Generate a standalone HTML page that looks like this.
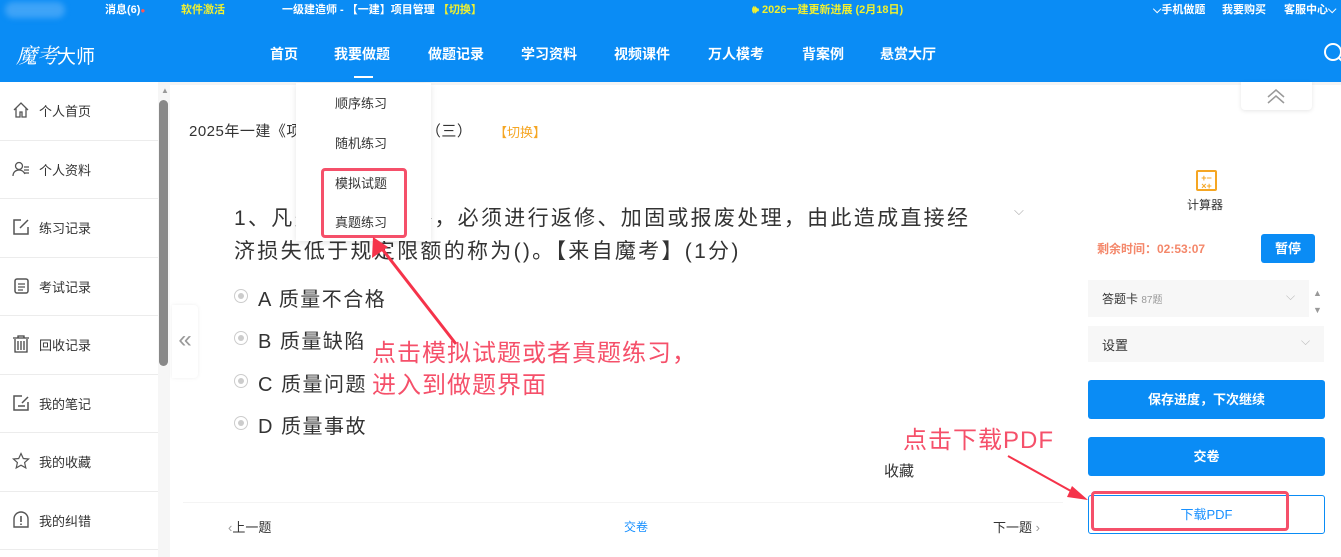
<!DOCTYPE html>
<html><head><meta charset="utf-8">
<style>
*{margin:0;padding:0;box-sizing:border-box}
body{width:1341px;height:557px;overflow:hidden;background:#fff;font-family:"Liberation Sans","Noto Sans CJK SC",sans-serif;color:#333;position:relative}
.a{position:absolute;white-space:nowrap}
.hdr{position:absolute;left:0;top:0;width:1341px;height:82px;background:#0a8cf5}
.top{font-size:11px;color:#fff;font-weight:bold;top:1px}
.nav{font-size:14px;color:#fff;top:44px;font-weight:bold}
.side{position:absolute;left:0;top:82px;width:158px}
.item{height:58.5px;border-bottom:1px solid #ececec;position:relative;font-size:13px;color:#333}
.item span{position:absolute;left:39px;top:19px}
.item svg{position:absolute;left:12px;top:19px}
.opt{font-size:20px;color:#333;letter-spacing:1.5px}
.rad{position:absolute;width:14px;height:14px;border:1px solid #ccc;border-radius:50%}
.rad:after{content:"";position:absolute;left:3px;top:3px;width:6px;height:6px;border-radius:50%;background:#ccc}
.btn{position:absolute;left:1088px;width:237px;height:39px;background:#0a8cf5;color:#fff;border-radius:3px;font-size:13px;font-weight:bold;text-align:center;line-height:39px}
.red{color:#f5506a;font-size:24px;letter-spacing:1px}
</style></head><body>
<div class="hdr"></div>
<div class="a" style="left:5px;top:2px;width:60px;height:16px;background:#3ea3f7;border-radius:8px;filter:blur(3px)"></div>
<div class="a top" style="left:105px">消息(6)<span style="color:#f55;font-size:8px">●</span></div>
<div class="a top" style="left:181px;color:#f0f030">软件激活</div>
<div class="a top" style="left:282px">一级建造师 - 【一建】项目管理 <span style="color:#f0f030">【切换】</span></div>
<div class="a top" style="left:752px;color:#f0f030">🕪 2026一建更新进展 (2月18日)</div>
<div class="a top" style="left:1153px">⌵手机做题</div>
<div class="a top" style="left:1222px">我要购买</div>
<div class="a top" style="left:1284px">客服中心⌵</div>
<div class="a" style="left:16px;top:40px;color:#fff;font-size:21px;font-family:'Liberation Serif','Noto Serif CJK SC',serif;font-style:italic">魔考</div>
<div class="a" style="left:57px;top:42px;color:#fff;font-size:19px">大师</div>
<div class="a nav" style="left:270px">首页</div>
<div class="a nav" style="left:334px">我要做题</div>
<div class="a" style="left:354px;top:76px;width:19px;height:2px;background:#fff"></div>
<div class="a nav" style="left:428px">做题记录</div>
<div class="a nav" style="left:521px">学习资料</div>
<div class="a nav" style="left:614px">视频课件</div>
<div class="a nav" style="left:708px">万人模考</div>
<div class="a nav" style="left:802px">背案例</div>
<div class="a nav" style="left:880px">悬赏大厅</div>
<svg class="a" style="left:1322px;top:42px" width="20" height="24"><circle cx="11" cy="10" r="8" fill="none" stroke="#fff" stroke-width="2"/><path d="M17 16l5 5" stroke="#fff" stroke-width="2"/></svg>

<div class="a" style="left:158px;top:82px;width:1183px;height:3px;background:#f4f4f4"></div>
<div class="side">
<div class="item"><svg width="18" height="18"><path d="M2 9L9 2l7 7M4 7v9h4v-5h2v5h4V7" fill="none" stroke="#555" stroke-width="1.3"/></svg><span>个人首页</span></div>
<div class="item"><svg width="18" height="18"><circle cx="7" cy="6" r="3.5" fill="none" stroke="#555" stroke-width="1.3"/><path d="M1 16c0-4 3-6 6-6s5 2 6 4M12 7h5M12 10h5M12 13h5" fill="none" stroke="#555" stroke-width="1.3"/></svg><span>个人资料</span></div>
<div class="item"><svg width="18" height="18"><path d="M9 2H2v14h14V9M8 10l8-8" fill="none" stroke="#555" stroke-width="1.5"/></svg><span>练习记录</span></div>
<div class="item"><svg width="18" height="18"><rect x="3" y="2" width="13" height="14" rx="2" fill="none" stroke="#555" stroke-width="1.5"/><path d="M6 7h7M6 10h7M6 13h5" stroke="#555" stroke-width="1.3"/></svg><span>考试记录</span></div>
<div class="item"><svg width="18" height="18"><path d="M1 3h16M6 3V1h6v2M3 4v13h12V4M6 6v9M9 6v9M12 6v9" fill="none" stroke="#444" stroke-width="1.3"/></svg><span>回收记录</span></div>
<div class="item"><svg width="18" height="18"><path d="M10 2H2v14h14V8M6 12h7M10 9l6-6" fill="none" stroke="#555" stroke-width="1.5"/></svg><span>我的笔记</span></div>
<div class="item"><svg width="18" height="18"><path d="M9 1.5l2.3 5 5.3.5-4 3.6 1.2 5.3L9 13.2 4.2 15.9l1.2-5.3-4-3.6 5.3-.5z" fill="none" stroke="#555" stroke-width="1.2"/></svg><span>我的收藏</span></div>
<div class="item"><svg width="18" height="18"><path d="M2 16V8a7 7 0 0114 0v8z" fill="none" stroke="#555" stroke-width="1.4"/><path d="M9 5v6M9 12.5v1.5" stroke="#555" stroke-width="1.6"/></svg><span>我的纠错</span></div>
</div>
<div class="a" style="left:158px;top:85px;width:12px;height:472px;background:#f6f6f6"></div>
<div class="a" style="left:161px;top:86px;font-size:8px;color:#999">▲</div>
<div class="a" style="left:159px;top:100px;width:9px;height:266px;background:#888;border-radius:5px"></div>
<div class="a" style="left:172px;top:305px;width:26px;height:73px;background:#fff;border-radius:0 4px 4px 0;box-shadow:0 0 4px #eee;color:#999;font-size:24px;text-align:center;line-height:70px">«</div>

<div class="a" style="left:189px;top:120px;font-size:15px;color:#333;letter-spacing:0.5px">2025年一建《项目管理》模拟试题（三）</div>
<div class="a" style="left:494px;top:122px;font-size:13px;color:#f5a623">【切换】</div>

<div class="a" style="left:234px;top:202px;font-size:21px;color:#333;line-height:33px;letter-spacing:2.3px">1、凡是质量不合格，必须进行返修、加固或报废处理，由此造成直接经<br>济损失低于规定限额的称为()。【来自魔考】(1分)</div>
<div class="a" style="left:1014px;top:203px;color:#aaa;font-size:13px">⌵</div>
<div class="rad" style="left:234px;top:289px"></div><div class="a opt" style="left:258px;top:283px">A 质量不合格</div>
<div class="rad" style="left:234px;top:331px"></div><div class="a opt" style="left:258px;top:325px">B 质量缺陷</div>
<div class="rad" style="left:234px;top:374px"></div><div class="a opt" style="left:258px;top:368px">C 质量问题</div>
<div class="rad" style="left:234px;top:416px"></div><div class="a opt" style="left:258px;top:410px">D 质量事故</div>
<div class="a" style="left:884px;top:460px;font-size:15px">收藏</div>
<div class="a" style="left:183px;top:502px;width:880px;height:1px;background:#f4f4f4"></div>
<div class="a" style="left:228px;top:517px;font-size:13px"><span style="color:#999">‹</span>上一题</div>
<div class="a" style="left:624px;top:518px;font-size:12px;color:#1890ff">交卷</div>
<div class="a" style="left:993px;top:517px;font-size:13px">下一题 <span style="color:#999">›</span></div>

<div class="a" style="left:296px;top:83px;width:135px;height:158px;background:#fff;box-shadow:0 2px 6px rgba(0,0,0,.1)"></div>
<div class="a" style="left:335px;top:93px;font-size:13px">顺序练习</div>
<div class="a" style="left:335px;top:133px;font-size:13px">随机练习</div>
<div class="a" style="left:335px;top:173px;font-size:13px">模拟试题</div>
<div class="a" style="left:335px;top:212px;font-size:13px">真题练习</div>
<div class="a" style="left:321px;top:168px;width:86px;height:70px;border:3px solid #f5506a;border-radius:4px"></div>

<svg class="a" style="left:0;top:0" width="1341" height="557">
<line x1="456" y1="344" x2="379" y2="245" stroke="#f5334a" stroke-width="3"/>
<polygon points="373,237 372,258 388,247" fill="#f5334a"/>
<line x1="1008" y1="456" x2="1078" y2="495" stroke="#f5334a" stroke-width="2"/>
<polygon points="1088,500 1072,486 1067,497" fill="#f5334a"/>
</svg>
<div class="a red" style="left:372px;top:338px;line-height:32px">点击模拟试题或者真题练习，<br>进入到做题界面</div>
<div class="a red" style="left:903px;top:420px">点击下载PDF</div>

<div class="a" style="left:1241px;top:82px;width:71px;height:28px;background:#fff;border-radius:0 0 4px 4px;box-shadow:0 1px 4px rgba(0,0,0,.1)"></div>
<svg class="a" style="left:1266px;top:88px" width="20" height="16"><path d="M2 9l8-7 8 7M2 15l8-7 8 7" fill="none" stroke="#999" stroke-width="1.5"/></svg>
<div class="a" style="left:1196px;top:170px;width:21px;height:21px;border:2px solid #f5a623;border-radius:2px;color:#f5a623;font-size:9px;font-weight:bold;line-height:8px;text-align:center;padding-top:2px">+−<br>×+</div>
<div class="a" style="left:1187px;top:196px;font-size:12px">计算器</div>
<div class="a" style="left:1097px;top:240px;font-size:12px;color:#f4876a;font-weight:bold">剩余时间：02:53:07</div>
<div class="a" style="left:1261px;top:234px;width:54px;height:29px;background:#0a8cf5;border-radius:3px;color:#fff;font-size:13px;font-weight:bold;text-align:center;line-height:29px">暂停</div>
<div class="a" style="left:1088px;top:280px;width:221px;height:37px;background:#f7f7f7"></div>
<div class="a" style="left:1102px;top:290px;font-size:12px">答题卡 <span style="color:#999;font-size:10px">87题</span></div>
<div class="a" style="left:1286px;top:289px;color:#bbb;font-size:12px">⌵</div>
<div class="a" style="left:1313px;top:285px;color:#999;font-size:9px;line-height:17px">▲<br>▼</div>
<div class="a" style="left:1088px;top:326px;width:236px;height:36px;background:#f7f7f7"></div>
<div class="a" style="left:1102px;top:335px;font-size:13px">设置</div>
<div class="a" style="left:1301px;top:334px;color:#bbb;font-size:12px">⌵</div>
<div class="btn" style="top:380px">保存进度，下次继续</div>
<div class="btn" style="top:437px">交卷</div>
<div class="btn" style="top:495px;background:#fff;border:1px solid #0a8cf5;color:#1890ff;font-weight:normal;line-height:37px">下载PDF</div>
<div class="a" style="left:1091px;top:491px;width:198px;height:40px;border:3px solid #f5506a;border-radius:4px"></div>
</body></html>
